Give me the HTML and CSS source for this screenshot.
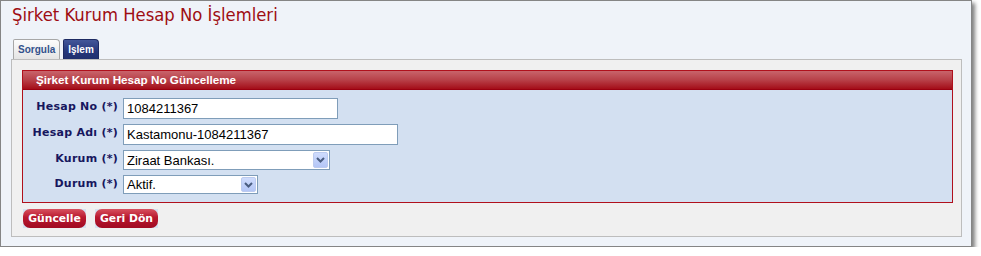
FILE: index.html
```html
<!DOCTYPE html>
<html lang="tr">
<head>
<meta charset="utf-8">
<title>Şirket Kurum Hesap No İşlemleri</title>
<link rel="stylesheet" href="styles.css">
</head>
<body>
<div class="window">
  <h1 class="title">Şirket Kurum Hesap No İşlemleri</h1>
  <div class="tabs">
    <span class="tab">Sorgula</span>
    <span class="tab active">Işlem</span>
  </div>
  <div class="panel">
    <div class="box">
      <div class="box-head">Şirket Kurum Hesap No Güncelleme</div>
      <div class="form">
        <label class="lbl">Hesap No (*)</label>
        <div class="field"><input class="txt w-no" type="text" value="1084211367"></div>
        <label class="lbl">Hesap Adı (*)</label>
        <div class="field"><input class="txt w-ad" type="text" value="Kastamonu-1084211367"></div>
        <label class="lbl">Kurum (*)</label>
        <div class="field">
          <div class="sel w-kurum"><span class="sel-text">Ziraat Bankası.</span><span class="sel-btn"><svg width="9" height="6" viewBox="0 0 9 6"><path d="M1 1 L4.5 4.5 L8 1" fill="none" stroke="#4a5d80" stroke-width="2"/></svg></span></div>
        </div>
        <label class="lbl">Durum (*)</label>
        <div class="field">
          <div class="sel w-durum"><span class="sel-text">Aktif.</span><span class="sel-btn"><svg width="9" height="6" viewBox="0 0 9 6"><path d="M1 1 L4.5 4.5 L8 1" fill="none" stroke="#4a5d80" stroke-width="2"/></svg></span></div>
        </div>
      </div>
    </div>
    <div class="buttons">
      <span class="btn"><span class="btn-face">Güncelle</span></span>
      <span class="btn"><span class="btn-face">Geri Dön</span></span>
    </div>
  </div>
</div>
</body>
</html>
```

FILE: styles.css
```css
html, body {
  margin: 0;
  padding: 0;
  background: #ffffff;
}
body {
  font-family: "DejaVu Sans", Verdana, sans-serif;
}
.window {
  box-sizing: border-box;
  width: 972px;
  height: 247px;
  border: 1px solid #858585;
  background: #eff3f9;
  box-shadow: 3px 3px 4px rgba(0, 0, 0, 0.5);
  padding: 0 9px 0 10px;
}
.title {
  margin: 0;
  height: 38px;
  box-sizing: border-box;
  padding: 3px 0 0 1px;
  font-family: "DejaVu Sans Condensed", "DejaVu Sans", sans-serif;
  font-weight: normal;
  font-size: 18.3px;
  line-height: 22px;
  color: #9e0d12;
}
.tabs {
  display: flex;
  align-items: flex-end;
  gap: 3px;
  height: 20px;
  padding-left: 2px;
}
.tab {
  box-sizing: border-box;
  height: 20px;
  padding: 0 4px;
  border: 1px solid #a7a7a7;
  border-bottom: none;
  border-radius: 2px 4px 0 0;
  background: linear-gradient(#fcfcfc, #e4e4e4);
  font-family: "Liberation Sans", Arial, sans-serif;
  font-weight: bold;
  font-size: 10px;
  line-height: 19px;
  color: #33528c;
}
.tab.active {
  border-color: #1d2a62;
  background: linear-gradient(#43579a, #25367a 60%, #1f2f6e);
  color: #ffffff;
}
.panel {
  box-sizing: border-box;
  width: 951px;
  height: 178px;
  border: 1px solid #bdbdbd;
  background: #f0f0f0;
  padding: 10px 8px 0 10px;
}
.box {
  border: 1px solid #b0101c;
  background: #d3e0f1;
}
.box-head {
  height: 19px;
  box-sizing: border-box;
  border-bottom: 1px solid #9a0010;
  background: linear-gradient(#c8646b, #b84048 50%, #a40d18);
  color: #ffffff;
  font-family: "Liberation Sans", Arial, sans-serif;
  font-weight: bold;
  font-size: 11.7px;
  line-height: 18px;
  padding-left: 13px;
}
.form {
  display: grid;
  grid-template-columns: 95px auto;
  column-gap: 5px;
  row-gap: 5px;
  padding: 8px 0 8px 0;
  justify-items: start;
}
.lbl {
  justify-self: end;
  align-self: start;
  padding-top: 2px;
  font-weight: bold;
  font-size: 11px;
  letter-spacing: 0.25px;
  line-height: 14px;
  color: #17175e;
  white-space: nowrap;
}
.field {
  display: flex;
}
.txt {
  box-sizing: border-box;
  height: 21px;
  margin: 0;
  border: 1px solid #7f9db9;
  background: #ffffff;
  padding: 0 3px;
  font-family: "Liberation Sans", Arial, sans-serif;
  font-size: 13px;
  color: #000000;
  outline: none;
}
.w-no { width: 215px; }
.w-ad { width: 275px; }
.sel {
  box-sizing: border-box;
  display: flex;
  align-items: center;
  justify-content: space-between;
  height: 20px;
  border: 1px solid #7f9db9;
  background: #ffffff;
  padding: 0 1px 0 3px;
  font-family: "Liberation Sans", Arial, sans-serif;
  font-size: 13px;
  color: #000000;
}
.w-kurum { width: 207px; }
.w-durum { width: 135px; height: 19px; }
.sel-btn {
  box-sizing: border-box;
  display: flex;
  align-items: center;
  justify-content: center;
  width: 15px;
  height: 16px;
  border: 1px solid #bccbef;
  border-radius: 2px;
  background: linear-gradient(#cfdcfd, #b4c6f6);
}
.w-durum .sel-btn { height: 15px; }
.buttons {
  display: flex;
  gap: 9px;
  margin-top: 6px;
  padding-left: 1px;
}
.btn {
  display: block;
  background: #d6e2f1;
}
.btn-face {
  display: block;
  box-sizing: border-box;
  width: 63px;
  height: 19px;
  border-radius: 7px;
  background: linear-gradient(#d8505e, #b8182e 45%, #a10a22);
  color: #ffffff;
  font-weight: bold;
  font-size: 10.8px;
  line-height: 19px;
  text-align: center;
}
```
